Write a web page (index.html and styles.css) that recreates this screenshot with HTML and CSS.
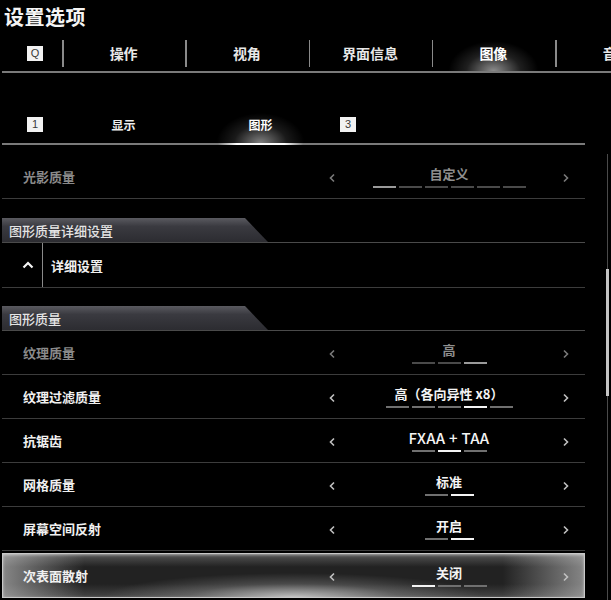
FILE: index.html
```html
<!DOCTYPE html>
<html lang="zh">
<head>
<meta charset="utf-8">
<title>设置选项</title>
<link rel="stylesheet" href="styles.css">
</head>
<body>
<div class="page">
  <h1 class="title">设置选项</h1>
  <nav class="tabs">
    <div class="tab-key"><span class="key">Q</span></div>
    <div class="tab">操作</div>
    <div class="tab">视角</div>
    <div class="tab">界面信息</div>
    <div class="tab active">图像</div>
    <div class="tab">音频</div>
  </nav>
  <nav class="subtabs">
    <div class="sub-key"><span class="key">1</span></div>
    <div class="subtab">显示</div>
    <div class="subtab active">图形</div>
    <div class="sub-key3"><span class="key">3</span></div>
  </nav>
  <div class="content">
    <div class="list">
      <div class="row dim">
        <div class="label">光影质量</div>
        <div class="control">
          <span class="chev"><svg width="6" height="10" viewBox="0 0 6 10"><polyline points="5,1.5 1.5,5 5,8.5"/></svg></span>
          <div class="value">
            <div class="val-text">自定义</div>
            <div class="segs"><i class="sel"></i><i></i><i></i><i></i><i></i><i></i></div>
          </div>
          <span class="chev"><svg width="6" height="10" viewBox="0 0 6 10"><polyline points="1,1.5 4.5,5 1,8.5"/></svg></span>
        </div>
      </div>

      <div class="section"><div class="section-tab">图形质量详细设置</div></div>
      <div class="row expand">
        <div class="toggle"><svg width="12" height="8" viewBox="0 0 12 8"><polyline points="1.5,6.5 6,2 10.5,6.5"/></svg></div>
        <div class="label-exp">详细设置</div>
      </div>

      <div class="section second"><div class="section-tab">图形质量</div></div>
      <div class="row dim">
        <div class="label">纹理质量</div>
        <div class="control">
          <span class="chev"><svg width="6" height="10" viewBox="0 0 6 10"><polyline points="5,1.5 1.5,5 5,8.5"/></svg></span>
          <div class="value">
            <div class="val-text">高</div>
            <div class="segs"><i></i><i></i><i class="sel"></i></div>
          </div>
          <span class="chev"><svg width="6" height="10" viewBox="0 0 6 10"><polyline points="1,1.5 4.5,5 1,8.5"/></svg></span>
        </div>
      </div>
      <div class="row">
        <div class="label">纹理过滤质量</div>
        <div class="control">
          <span class="chev"><svg width="6" height="10" viewBox="0 0 6 10"><polyline points="5,1.5 1.5,5 5,8.5"/></svg></span>
          <div class="value">
            <div class="val-text">高（各向异性 x8）</div>
            <div class="segs"><i></i><i></i><i></i><i class="sel"></i><i></i></div>
          </div>
          <span class="chev"><svg width="6" height="10" viewBox="0 0 6 10"><polyline points="1,1.5 4.5,5 1,8.5"/></svg></span>
        </div>
      </div>
      <div class="row">
        <div class="label">抗锯齿</div>
        <div class="control">
          <span class="chev"><svg width="6" height="10" viewBox="0 0 6 10"><polyline points="5,1.5 1.5,5 5,8.5"/></svg></span>
          <div class="value">
            <div class="val-text latin">FXAA + TAA</div>
            <div class="segs"><i></i><i class="sel"></i><i></i></div>
          </div>
          <span class="chev"><svg width="6" height="10" viewBox="0 0 6 10"><polyline points="1,1.5 4.5,5 1,8.5"/></svg></span>
        </div>
      </div>
      <div class="row">
        <div class="label">网格质量</div>
        <div class="control">
          <span class="chev"><svg width="6" height="10" viewBox="0 0 6 10"><polyline points="5,1.5 1.5,5 5,8.5"/></svg></span>
          <div class="value">
            <div class="val-text">标准</div>
            <div class="segs"><i></i><i class="sel"></i></div>
          </div>
          <span class="chev"><svg width="6" height="10" viewBox="0 0 6 10"><polyline points="1,1.5 4.5,5 1,8.5"/></svg></span>
        </div>
      </div>
      <div class="row">
        <div class="label">屏幕空间反射</div>
        <div class="control">
          <span class="chev"><svg width="6" height="10" viewBox="0 0 6 10"><polyline points="5,1.5 1.5,5 5,8.5"/></svg></span>
          <div class="value">
            <div class="val-text">开启</div>
            <div class="segs"><i></i><i class="sel"></i></div>
          </div>
          <span class="chev"><svg width="6" height="10" viewBox="0 0 6 10"><polyline points="1,1.5 4.5,5 1,8.5"/></svg></span>
        </div>
      </div>
      <div class="row focused">
        <div class="label">次表面散射</div>
        <div class="control">
          <span class="chev"><svg width="6" height="10" viewBox="0 0 6 10"><polyline points="5,1.5 1.5,5 5,8.5"/></svg></span>
          <div class="value">
            <div class="val-text">关闭</div>
            <div class="segs"><i class="sel"></i><i></i><i></i></div>
          </div>
          <span class="chev"><svg width="6" height="10" viewBox="0 0 6 10"><polyline points="1,1.5 4.5,5 1,8.5"/></svg></span>
        </div>
      </div>
    </div>
    <div class="scrollbar"><div class="thumb"></div></div>
  </div>
</div>
</body>
</html>
```

FILE: styles.css
```css
* { box-sizing: border-box; }
html, body { margin: 0; padding: 0; background: #000; }
body {
  font-family: "Noto Sans CJK SC", "Noto Sans", sans-serif;
  color: #f2f2f2;
  width: 611px;
  height: 600px;
  overflow: hidden;
}
.page { width: 611px; height: 600px; overflow: hidden; }

.title {
  margin: 0;
  height: 37px;
  padding-left: 4px;
  font-size: 20px;
  line-height: 33px;
  font-weight: 700;
  color: #f4f4f4;
  letter-spacing: 0.5px;
}

.key {
  display: inline-block;
  width: 16px;
  height: 15px;
  background: #f2f2f2;
  color: #3a3a3a;
  font-family: "Liberation Sans", "DejaVu Sans", sans-serif;
  font-size: 11px;
  line-height: 15px;
  text-align: center;
}

/* main tabs */
.tabs {
  display: flex;
  height: 36px;
  margin-left: 2px;
  border-bottom: 2px solid #7a7a7a;
  overflow: hidden;
}
.tab-key {
  flex: 0 0 60px;
  display: flex;
  align-items: center;
  padding-left: 25px;
  padding-bottom: 2px;
}
.tab {
  flex: 0 0 123.25px;
  position: relative;
  text-align: center;
  font-size: 14px;
  font-weight: 700;
  line-height: 32px;
  color: #e8e8e8;
  white-space: nowrap;
}
.tab::before {
  content: "";
  position: absolute;
  left: 0;
  top: 3px;
  width: 1.5px;
  height: 27px;
  background: #8a8a8a;
}
.tab.active {
  background: radial-gradient(ellipse 45px 30px at 50% 100%, rgba(255,255,255,0.55), rgba(255,255,255,0.12) 60%, rgba(255,255,255,0) 100%);
  color: #fff;
}
.tab.active::after {
  content: "";
  position: absolute;
  left: 16px;
  right: 16px;
  bottom: -2px;
  height: 2px;
  background: linear-gradient(to right, rgba(255,255,255,0), #fff 22%, #fff 78%, rgba(255,255,255,0));
}

/* sub tabs */
.subtabs {
  display: flex;
  height: 35px;
  margin-top: 37px;
  margin-left: 2px;
  border-bottom: 2px solid #7a7a7a;
  width: 583px;
}
.sub-key {
  flex: 0 0 53px;
  display: flex;
  align-items: center;
  padding-left: 25px;
  padding-bottom: 4px;
}
.subtab {
  flex: 0 0 137px;
  position: relative;
  text-align: center;
  font-size: 12px;
  font-weight: 700;
  line-height: 30px;
  color: #eee;
}
.subtab.active {
  background: radial-gradient(ellipse 44px 30px at 50% 100%, rgba(255,255,255,0.5), rgba(255,255,255,0.1) 60%, rgba(255,255,255,0) 100%);
  color: #fff;
}
.subtab.active::after {
  content: "";
  position: absolute;
  left: 26px;
  right: 26px;
  bottom: -2px;
  height: 2px;
  background: linear-gradient(to right, rgba(255,255,255,0), #fff 22%, #fff 78%, rgba(255,255,255,0));
}
.sub-key3 {
  display: flex;
  align-items: center;
  padding-left: 11px;
  padding-bottom: 4px;
}

/* content */
.content {
  display: flex;
}
.list {
  width: 583px;
  margin-left: 2px;
  padding-top: 10px;
}
.row {
  display: flex;
  align-items: center;
  height: 44px;
  border-bottom: 1px solid #3c3c3c;
}
.label {
  flex: 1;
  padding-left: 21px;
  font-size: 13px;
  font-weight: 700;
  color: #f0f0f0;
}
.row.dim .label { color: #8a8a8a; }
.control {
  display: flex;
  align-items: center;
  width: 254px;
  margin-right: 9px;
}
.chev {
  flex: 0 0 20px;
  display: flex;
  justify-content: center;
  align-items: center;
  padding-top: 2px;
}
.chev svg polyline {
  fill: none;
  stroke: #c0c0c0;
  stroke-width: 1.6;
}
.row.dim .chev svg polyline { stroke: #7a7a7a; }
.value {
  flex: 1;
  display: flex;
  flex-direction: column;
  align-items: center;
  gap: 4px;
}
.val-text {
  font-size: 13px;
  font-weight: 700;
  line-height: 16px;
  color: #f4f4f4;
  white-space: nowrap;
}
.val-text.latin { font-size: 15px; font-weight: 500; letter-spacing: 0.3px; }
.row.dim .val-text { color: #8e8e8e; }
.segs {
  display: flex;
  gap: 3px;
}
.segs i {
  display: block;
  width: 23px;
  height: 2px;
  background: #707070;
}
.segs i.sel { background: #f4f4f4; }
.row.dim .segs i { background: #4a4a4a; }
.row.dim .segs i.sel { background: #9a9a9a; }

.section {
  margin-top: 19px;
  height: 25px;
  border-bottom: 1px solid #4a4a4a;
}
.section.second { margin-top: 18px; }
.section-tab {
  width: 266px;
  height: 24px;
  padding-left: 7px;
  font-size: 13px;
  line-height: 25px;
  font-weight: 500;
  color: #e4e4e4;
  background: linear-gradient(#5a5a60, #3a3a40 35%, #2c2c31);
  clip-path: polygon(0 0, 243px 0, 266px 100%, 0 100%);
}

.row.expand {
  height: 45px;
  align-items: stretch;
}
.toggle {
  flex: 0 0 41px;
  border-right: 1px solid #8a8a8a;
  display: flex;
  align-items: center;
  justify-content: center;
  padding-left: 12px;
}
.toggle svg polyline {
  fill: none;
  stroke: #f4f4f4;
  stroke-width: 2.2;
}
.label-exp {
  display: flex;
  align-items: center;
  padding-left: 8px;
  font-size: 13px;
  font-weight: 700;
  color: #f0f0f0;
}

.row.focused {
  margin-top: 2px;
  height: 45px;
  border: 1px solid #c8c8c8;
  background:
    radial-gradient(ellipse 190px 24px at 50% 100%, rgba(255,255,255,0.65), rgba(255,255,255,0.18) 55%, rgba(255,255,255,0) 100%),
    linear-gradient(to right, rgba(200,200,200,0.6), rgba(60,60,60,0) 14%, rgba(60,60,60,0) 86%, rgba(200,200,200,0.6)),
    linear-gradient(#555, #222 30%, #222 70%, #444);
  box-shadow: inset 0 1px 3px rgba(255,255,255,0.5);
}
.row.focused .label { padding-left: 20px; }
.row.focused .control { margin-right: 8px; }

.scrollbar {
  margin-left: 21px;
  margin-top: 9px;
  width: 3px;
  height: 460px;
  background: linear-gradient(to right, rgba(0,0,0,0) 1px, #4a4a4a 1px, #4a4a4a 2px, rgba(0,0,0,0) 2px);
}
.thumb {
  margin-top: 115px;
  width: 3px;
  height: 127px;
  background: #c4c4c4;
}
```
